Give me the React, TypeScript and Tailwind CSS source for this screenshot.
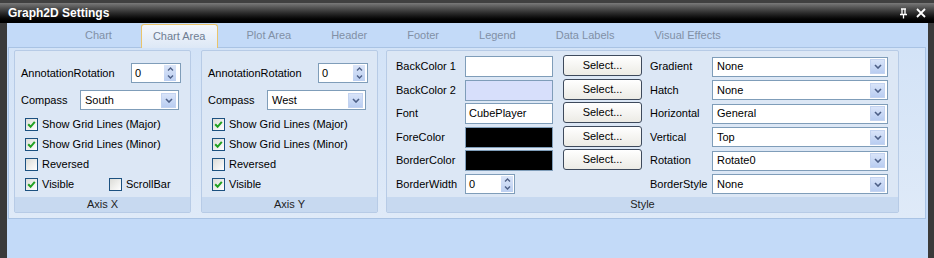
import React from 'react';

const tabs = ['Chart', 'Chart Area', 'Plot Area', 'Header', 'Footer', 'Legend', 'Data Labels', 'Visual Effects'];

function Chevron() {
  return (
    <svg width="8" height="5" viewBox="0 0 8 5">
      <path d="M1 1 L4 4 L7 1" stroke="#4d5f86" strokeWidth="1.6" fill="none" />
    </svg>
  );
}

function DropBtn() {
  return (
    <span className="ml-auto mr-[2px] w-[15px] h-[15px] flex items-center justify-center bg-linear-to-b from-[#d9e4f9] to-[#b9cdf1] border border-[#c3d3f0]">
      <Chevron />
    </span>
  );
}

function Combo({ value, w }: { value: string; w: string }) {
  return (
    <div className={`${w} h-[20px] flex items-center bg-white border border-[#7f9db9]`}>
      <span className="pl-[4px] text-black">{value}</span>
      <DropBtn />
    </div>
  );
}

function NumBox({ mr }: { mr: string }) {
  return (
    <div className="w-[50px] h-[20px] flex items-center bg-white border border-[#7f9db9]">
      <span className="pl-[3px] text-black">0</span>
      <span className={`ml-auto ${mr} w-[12px] h-[16px] flex flex-col items-center justify-around bg-linear-to-b from-[#dbe5f8] to-[#bccff1]`}>
        <svg width="7" height="4" viewBox="0 0 7 4">
          <path d="M1 3.5 L3.5 1 L6 3.5" stroke="#4d5f86" strokeWidth="1.4" fill="none" />
        </svg>
        <svg width="7" height="4" viewBox="0 0 7 4">
          <path d="M1 0.5 L3.5 3 L6 0.5" stroke="#4d5f86" strokeWidth="1.4" fill="none" />
        </svg>
      </span>
    </div>
  );
}

function Check({ label, checked }: { label: string; checked: boolean }) {
  return (
    <div className="h-[20px] flex items-center gap-[4px]">
      <span className="w-[13px] h-[13px] flex items-center justify-center border border-[#1c5180] bg-linear-to-br from-[#dcdcd7] to-white">
        {checked && (
          <svg width="9" height="9" viewBox="0 0 9 9">
            <path d="M1.2 4.3 L3.6 6.8 L7.8 1.8" stroke="#21a121" strokeWidth="2" fill="none" />
          </svg>
        )}
      </span>
      <span className="text-black">{label}</span>
    </div>
  );
}

function Group({ title, w, children }: { title: string; w: string; children: React.ReactNode }) {
  return (
    <div className={`${w} h-[163px] flex flex-col border border-[#b7cbe6] rounded-[2px] bg-[#dce7f5]`}>
      <div className="flex-1">{children}</div>
      <div className="h-[15px] mx-[0px] mb-[0px] bg-[#c7d9f0] text-center leading-[15px] text-[#1e1e1e]">{title}</div>
    </div>
  );
}

function AxisGroup({ title, compass, mr, scrollBar }: { title: string; compass: string; mr: string; scrollBar: boolean }) {
  return (
    <Group title={title} w="w-[177px]">
      <div className="pl-[6px] pt-[12px]">
        <div className="h-[20px] flex items-center">
          <span className="w-[110px] text-black">AnnotationRotation</span>
          <NumBox mr={mr} />
        </div>
        <div className="h-[20px] mt-[7px] flex items-center">
          <span className="w-[59px] text-black">Compass</span>
          <Combo value={compass} w="w-[99px]" />
        </div>
        <div className="mt-[4px] pl-[4px]">
          <Check label="Show Grid Lines (Major)" checked />
          <Check label="Show Grid Lines (Minor)" checked />
          <Check label="Reversed" checked={false} />
          <div className="flex">
            <div className="w-[84px]">
              <Check label="Visible" checked />
            </div>
            {scrollBar && <Check label="ScrollBar" checked={false} />}
          </div>
        </div>
      </div>
    </Group>
  );
}

function SelectBtn() {
  return (
    <div className="w-[79px] h-[21px] -mt-[2px] flex items-center justify-center rounded-[3px] border border-[#3e4a5c] bg-linear-to-b from-white to-[#ecebe5] text-black">
      Select...
    </div>
  );
}

const styleRows = [
  { l: 'BackColor 1', box: 'bg-white', text: '', r: 'Gradient', v: 'None' },
  { l: 'BackColor 2', box: 'bg-[#d7dffb]', text: '', r: 'Hatch', v: 'None' },
  { l: 'Font', box: 'bg-white', text: 'CubePlayer', r: 'Horizontal', v: 'General' },
  { l: 'ForeColor', box: 'bg-black', text: '', r: 'Vertical', v: 'Top' },
  { l: 'BorderColor', box: 'bg-black', text: '', r: 'Rotation', v: 'Rotate0' },
];

export default function App() {
  return (
    <div className="w-[934px] h-[258px] flex flex-col bg-[#3a3a3a] overflow-hidden font-['Liberation_Sans',Arial,sans-serif] text-[11px]">
      {/* title bar */}
      <div className="h-[23px] flex items-center bg-linear-to-b from-[#7a7a7a] via-[#2c2c2c] to-black border-t-[3px] border-[#404040]">
        <span className="pl-[8px] text-white font-bold text-[12px]">Graph2D Settings</span>
        <div className="ml-auto mr-[8px] flex items-center gap-[8px]">
          <svg width="9" height="11" viewBox="0 0 9 11">
            <path d="M2 1 H7 M3 1 V6 M6 1 V6 M1 6.5 H8 M4.5 6.5 V10.5" stroke="white" strokeWidth="1.3" fill="none" />
          </svg>
          <svg width="10" height="10" viewBox="0 0 10 10">
            <path d="M1 1 L9 9 M9 1 L1 9" stroke="white" strokeWidth="1.8" fill="none" />
          </svg>
        </div>
      </div>

      {/* body */}
      <div className="flex-1 ml-[7px] mr-[6px] bg-[#c3daf8] flex flex-col">
        {/* tabs */}
        <div className="h-[24px] flex items-end pl-[67px] gap-[18px]">
          {tabs.map((t) =>
            t === 'Chart Area' ? (
              <div
                key={t}
                className="h-[24px] -mb-[1px] relative z-10 px-[11px] flex items-center rounded-t-[3px] border border-b-0 border-[#eac46a] bg-linear-to-b from-[#f4f7fc] to-[#dde8f6] text-[#6f7d92]"
              >
                {t}
              </div>
            ) : (
              <div key={t} className="h-[23px] px-[11px] flex items-center text-[#8190a6]">
                {t}
              </div>
            )
          )}
        </div>

        {/* panel */}
        <div className="h-[172px] ml-[1px] mr-[2px] flex pl-[5px] pt-[2px] border border-[#a9c3e4] bg-linear-to-b from-[#d3e3f7] to-[#dfeaf8]">
          <AxisGroup title="Axis X" compass="South" mr="mr-[4px]" scrollBar />
          <div className="ml-[10px]">
            <AxisGroup title="Axis Y" compass="West" mr="mr-[2px]" scrollBar={false} />
          </div>
          <div className="ml-[8px]">
            <Group title="Style" w="w-[513px]">
              <div className="pl-[9px] pt-[5px] flex flex-col gap-[2.5px]">
                {styleRows.map((r) => (
                  <div key={r.l} className="h-[21px] flex items-center">
                    <span className="w-[69px] text-black">{r.l}</span>
                    <div className={`w-[88px] h-[21px] flex items-center border border-[#7f9db9] ${r.box}`}>
                      <span className="pl-[3px] text-black">{r.text}</span>
                    </div>
                    <div className="ml-[10px]">
                      <SelectBtn />
                    </div>
                    <span className="ml-[8px] w-[62px] text-black">{r.r}</span>
                    <Combo value={r.v} w="w-[176px]" />
                  </div>
                ))}
                <div className="h-[21px] flex items-center">
                  <span className="w-[69px] text-black">BorderWidth</span>
                  <NumBox mr="mr-[1px]" />
                  <span className="ml-[135px] w-[62px] text-black">BorderStyle</span>
                  <Combo value="None" w="w-[176px]" />
                </div>
              </div>
            </Group>
          </div>
        </div>
      </div>
    </div>
  );
}
